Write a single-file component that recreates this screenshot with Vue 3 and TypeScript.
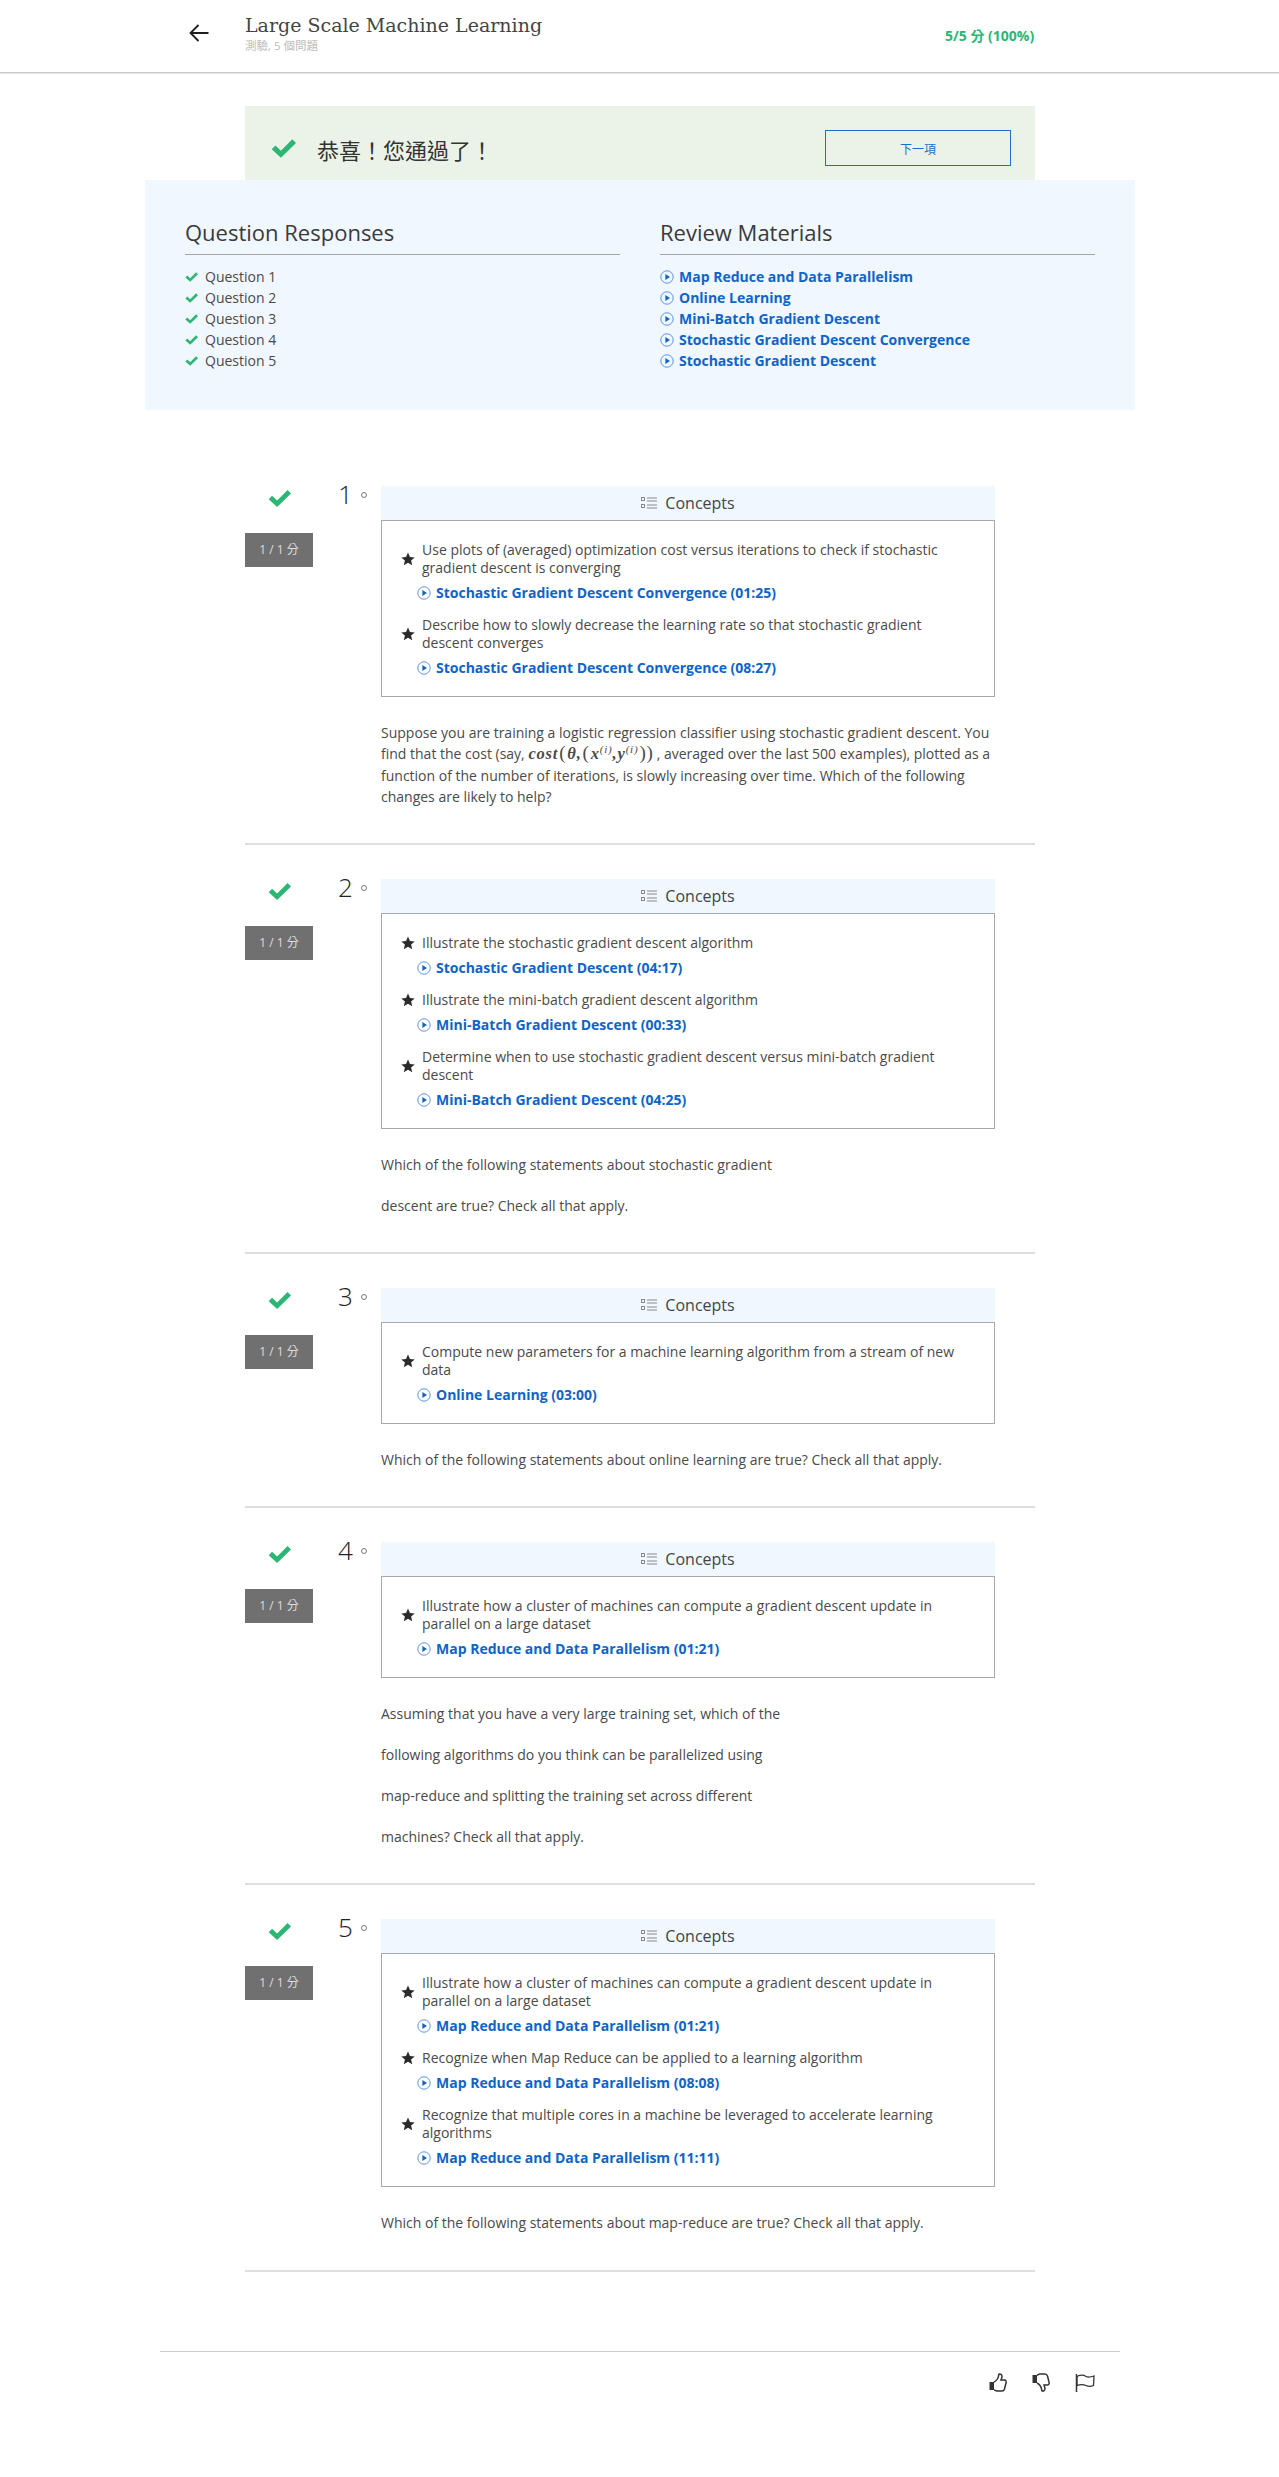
<script setup lang="ts">
interface Concept {
  text: string;
  link: string;
}

interface Question {
  num: number;
  concepts: Concept[];
  paragraphs: string[];
  hasMath?: boolean;
}

const questionRows = [1, 2, 3, 4, 5];

const materials = [
  'Map Reduce and Data Parallelism',
  'Online Learning',
  'Mini-Batch Gradient Descent',
  'Stochastic Gradient Descent Convergence',
  'Stochastic Gradient Descent',
];

const questions: Question[] = [
  {
    num: 1,
    hasMath: true,
    paragraphs: [],
    concepts: [
      {
        text: 'Use plots of (averaged) optimization cost versus iterations to check if stochastic gradient descent is converging',
        link: 'Stochastic Gradient Descent Convergence (01:25)',
      },
      {
        text: 'Describe how to slowly decrease the learning rate so that stochastic gradient descent converges',
        link: 'Stochastic Gradient Descent Convergence (08:27)',
      },
    ],
  },
  {
    num: 2,
    paragraphs: ['Which of the following statements about stochastic gradient', 'descent are true? Check all that apply.'],
    concepts: [
      { text: 'Illustrate the stochastic gradient descent algorithm', link: 'Stochastic Gradient Descent (04:17)' },
      { text: 'Illustrate the mini-batch gradient descent algorithm', link: 'Mini-Batch Gradient Descent (00:33)' },
      {
        text: 'Determine when to use stochastic gradient descent versus mini-batch gradient descent',
        link: 'Mini-Batch Gradient Descent (04:25)',
      },
    ],
  },
  {
    num: 3,
    paragraphs: ['Which of the following statements about online learning are true? Check all that apply.'],
    concepts: [
      {
        text: 'Compute new parameters for a machine learning algorithm from a stream of new data',
        link: 'Online Learning (03:00)',
      },
    ],
  },
  {
    num: 4,
    paragraphs: [
      'Assuming that you have a very large training set, which of the',
      'following algorithms do you think can be parallelized using',
      'map-reduce and splitting the training set across different',
      'machines? Check all that apply.',
    ],
    concepts: [
      {
        text: 'Illustrate how a cluster of machines can compute a gradient descent update in parallel on a large dataset',
        link: 'Map Reduce and Data Parallelism (01:21)',
      },
    ],
  },
  {
    num: 5,
    paragraphs: ['Which of the following statements about map-reduce are true? Check all that apply.'],
    concepts: [
      {
        text: 'Illustrate how a cluster of machines can compute a gradient descent update in parallel on a large dataset',
        link: 'Map Reduce and Data Parallelism (01:21)',
      },
      { text: 'Recognize when Map Reduce can be applied to a learning algorithm', link: 'Map Reduce and Data Parallelism (08:08)' },
      {
        text: 'Recognize that multiple cores in a machine be leveraged to accelerate learning algorithms',
        link: 'Map Reduce and Data Parallelism (11:11)',
      },
    ],
  },
];
</script>

<template>
  <div class="page">
    <header class="top-bar">
      <svg class="back" viewBox="0 0 20 18" width="20" height="18">
        <path d="M19.5 9H1.5M9.5 1L1.5 9l8 8" fill="none" stroke="#1f1f1f" stroke-width="1.8" />
      </svg>
      <div class="title-block">
        <div class="title">Large Scale Machine Learning</div>
        <div class="subtitle">測驗, 5 個問題</div>
      </div>
      <div class="score">5/5 分 (100%)</div>
    </header>

    <section class="banner">
      <svg class="banner-check" viewBox="0 0 68 50" width="25" height="19">
        <polygon points="2,27 12,17 27,31 58,0 68,10 27,50" fill="#2bb673" />
      </svg>
      <span class="banner-text">恭喜！您通過了！</span>
      <button class="next-btn">下一項</button>
    </section>

    <section class="summary">
      <div class="summary-col">
        <h2>Question Responses</h2>
        <ul>
          <li v-for="n in questionRows" :key="n">
            <svg class="mini-check" viewBox="0 0 68 50" width="13" height="10">
              <polygon points="2,27 12,17 27,31 58,0 68,10 27,50" fill="#2bb673" />
            </svg>
            Question {{ n }}
          </li>
        </ul>
      </div>
      <div class="summary-col">
        <h2>Review Materials</h2>
        <ul>
          <li v-for="m in materials" :key="m" class="material">
            <svg class="play" viewBox="0 0 14 14" width="14" height="14">
              <circle cx="7" cy="7" r="6.2" fill="none" stroke="#5b93e0" stroke-width="1" />
              <polygon points="5.4,4 10,7 5.4,10" fill="#0f64c8" />
            </svg>
            {{ m }}
          </li>
        </ul>
      </div>
    </section>

    <main class="questions">
      <article v-for="q in questions" :key="q.num" class="question">
        <div class="side">
          <svg class="q-check" viewBox="0 0 68 50" width="23" height="17">
            <polygon points="2,27 12,17 27,31 58,0 68,10 27,50" fill="#2bb673" />
          </svg>
          <div class="badge">1 / 1 分</div>
        </div>
        <div class="num">
          <span>{{ q.num }}</span>
          <i class="num-dot"></i>
        </div>
        <div class="body">
          <div class="concepts-head">
            <svg viewBox="0 0 16 12" width="16" height="12">
              <g fill="none" stroke="#8a8a8a" stroke-width="1">
                <rect x="0.5" y="0.5" width="3" height="3" />
                <rect x="0.5" y="7.5" width="3" height="3" />
                <path d="M6 1h10M6 4h10M6 8h10M6 11h10" />
              </g>
            </svg>
            Concepts
          </div>
          <div class="concepts-box">
            <div v-for="c in q.concepts" :key="c.link" class="concept">
              <div class="concept-row">
                <svg class="star" viewBox="0 0 24 24" width="14" height="14">
                  <polygon points="12,1 15.4,8.6 23.5,9.3 17.3,14.7 19.2,22.8 12,18.5 4.8,22.8 6.7,14.7 0.5,9.3 8.6,8.6" fill="#2b2b2b" />
                </svg>
                <div class="concept-text">{{ c.text }}</div>
              </div>
              <div class="concept-link">
                <svg class="play" viewBox="0 0 14 14" width="14" height="14">
                  <circle cx="7" cy="7" r="6.2" fill="none" stroke="#5b93e0" stroke-width="1" />
                  <polygon points="5.4,4 10,7 5.4,10" fill="#0f64c8" />
                </svg>
                {{ c.link }}
              </div>
            </div>
          </div>
          <div class="prompt">
            <p v-if="q.hasMath">
              Suppose you are training a logistic regression classifier using stochastic gradient descent. You
              find that the cost (say,
              <span class="math">cost<b>(</b>θ,<b>(</b>x<sup>(i)</sup>,y<sup>(i)</sup><b>))</b></span>, averaged over the last 500
              examples), plotted as a function of the number of iterations, is slowly increasing over time. Which of
              the following changes are likely to help?
            </p>
            <p v-for="p in q.paragraphs" :key="p">{{ p }}</p>
          </div>
        </div>
      </article>
    </main>

    <footer class="foot">
      <svg viewBox="0 0 18 19" width="18" height="19">
        <path d="M0.5 9h4.5v8H0.5z" fill="#333" />
        <path d="M5 9C7 8 9 6 9.5 3L10 1c2-.5 3 1 3 3l-1 3h3.500c1.500 0 2 1.500 1.500 3l-1.500 6c-.5 1.500-1.500 2-2.500 2H8c-1.500 0-2-1-3-1" fill="none" stroke="#333" stroke-width="1.500" />
      </svg>
      <svg viewBox="0 0 18 19" width="18" height="19">
        <g transform="translate(0 19) scale(1 -1)">
          <path d="M0.5 9h4.5v8H0.5z" fill="#333" />
          <path d="M5 9C7 8 9 6 9.5 3L10 1c2-.5 3 1 3 3l-1 3h3.500c1.500 0 2 1.500 1.500 3l-1.500 6c-.5 1.500-1.500 2-2.500 2H8c-1.500 0-2-1-3-1" fill="none" stroke="#333" stroke-width="1.500" />
        </g>
      </svg>
      <svg viewBox="0 0 20 19" width="20" height="19">
        <path d="M1.500 1v18" stroke="#333" stroke-width="1.500" fill="none" />
        <path d="M2 3.500C6 1.500 9 2 11 3.500c2 1 5 .5 8-.5l-.5 9.500c-3.500 1.500-5.500 1-7.500 0-2-1-5-1.500-9 0z" fill="none" stroke="#333" stroke-width="1.300" />
      </svg>
    </footer>
  </div>
</template>

<style scoped>
.page {
  width: 1279px;
  height: 2477px;
  overflow: hidden;
  background: #fff;
  color: #4a4a4a;
  font-family: "Open Sans", "Noto Sans CJK TC", sans-serif;
  font-size: 14px;
}

.top-bar {
  height: 72px;
  border-bottom: 1px solid #c9c9c9;
  box-shadow: 0 1px 1px #e6e6e6;
  position: relative;
  display: flex;
  padding-left: 189px;
}

.back {
  margin-top: 24px;
}

.title-block {
  margin-left: 36px;
  padding-top: 12px;
  width: 700px;
}

.title {
  font-family: "DejaVu Serif", "Liberation Serif", serif;
  font-size: 19px;
  line-height: 26px;
  color: #444;
}

.subtitle {
  font-size: 11.5px;
  line-height: 16px;
  color: #bcbcbc;
}

.score {
  position: absolute;
  left: 945px;
  top: 26px;
  font-size: 14px;
  font-weight: 700;
  line-height: 20px;
  color: #2bb673;
}

.banner {
  margin: 33px 0 0 245px;
  width: 790px;
  height: 74px;
  background: #ebf3e8;
  display: flex;
  align-items: flex-start;
  box-sizing: border-box;
  padding-left: 26px;
  position: relative;
}

.banner-check {
  margin-top: 33px;
}

.banner-text {
  margin-left: 21px;
  margin-top: 28px;
  font-size: 22px;
  line-height: 32px;
  color: #333;
}

.next-btn {
  position: absolute;
  left: 580px;
  top: 24px;
  width: 186px;
  height: 36px;
  border: 1px solid #1f6fc9;
  background: transparent;
  color: #1f6fc9;
  font-family: "Noto Sans CJK TC", sans-serif;
  font-size: 12px;
  padding: 0;
}

.summary {
  margin-left: 145px;
  width: 990px;
  height: 230px;
  background: #f0f7ff;
  box-sizing: border-box;
  padding: 34px 40px 0;
  display: flex;
  gap: 40px;
}

.summary-col {
  width: 435px;
}

.summary-col h2 {
  margin: 0;
  font-size: 22px;
  font-weight: 400;
  line-height: 36px;
  height: 40px;
  border-bottom: 1px solid #a5a5a5;
  color: #3a3a3a;
}

.summary-col ul {
  list-style: none;
  margin: 11px 0 0;
  padding: 0;
}

.summary-col li {
  height: 21px;
  line-height: 21px;
  display: flex;
  align-items: center;
  gap: 7px;
}

.summary-col li.material {
  color: #0f64c8;
  font-weight: 700;
  gap: 5px;
}

.question {
  margin-left: 245px;
  width: 790px;
  padding: 34px 0 36px;
  border-bottom: 2px solid #dedede;
  display: flex;
}

.question:last-child {
  padding-bottom: 37px;
}

.questions {
  margin-top: 42px;
}

.side {
  width: 68px;
  flex: none;
  display: flex;
  flex-direction: column;
  align-items: center;
}

.q-check {
  margin-top: 4px;
}

.badge {
  margin-top: 26px;
  width: 68px;
  height: 34px;
  line-height: 34px;
  text-align: center;
  background: #707070;
  color: #ddd;
  font-size: 12px;
}

.num {
  width: 68px;
  flex: none;
  height: 34px;
  margin-top: -9px;
  padding-left: 25px;
  box-sizing: border-box;
  display: flex;
  align-items: flex-start;
  color: #222;
  font-size: 26px;
  font-weight: 300;
  line-height: 34px;
}

.num-dot {
  width: 6px;
  height: 6px;
  border: 1px solid #777;
  border-radius: 50%;
  box-sizing: border-box;
  margin: 15px 0 0 8px;
}

.body {
  width: 614px;
  flex: none;
}

.concepts-head {
  height: 34px;
  background: #f0f7ff;
  display: flex;
  justify-content: center;
  align-items: center;
  gap: 8px;
  font-size: 16px;
  color: #444;
}

.concepts-box {
  border: 1px solid #a8a8a8;
  padding: 20px 27px 19px 19px;
}

.concept + .concept {
  margin-top: 14px;
}

.concept-row {
  display: flex;
  align-items: center;
  gap: 7px;
}

.concept-text {
  font-size: 14px;
  line-height: 18px;
  flex: 1;
}

.concept-link {
  margin: 6px 0 0 16px;
  line-height: 19px;
  display: flex;
  align-items: center;
  gap: 5px;
  font-weight: 700;
  color: #0f64c8;
}

.prompt {
  margin-top: 25px;
  font-size: 14px;
  line-height: 21px;
}

.prompt p {
  margin: 0;
}

.prompt p + p {
  margin-top: 20px;
}

.math {
  font-family: "Liberation Serif", serif;
  font-style: italic;
  font-weight: 700;
  font-size: 16.5px;
  line-height: 22px;
  letter-spacing: 0.8px;
  margin-right: 2px;
}

.math b {
  font-style: normal;
  font-weight: 400;
  font-size: 19px;
  line-height: 0;
  margin: 0 1px;
}

.math sup {
  font-size: 11px;
  font-weight: 400;
  line-height: 0;
}

.foot {
  margin: 79px 0 0 160px;
  width: 960px;
  border-top: 1px solid #ccc;
  height: 60px;
  display: flex;
  justify-content: flex-end;
  gap: 25px;
  padding: 21px 25px 0 0;
  box-sizing: border-box;
}
</style>

<style>
html,
body {
  margin: 0;
  background: #fff;
}
</style>
